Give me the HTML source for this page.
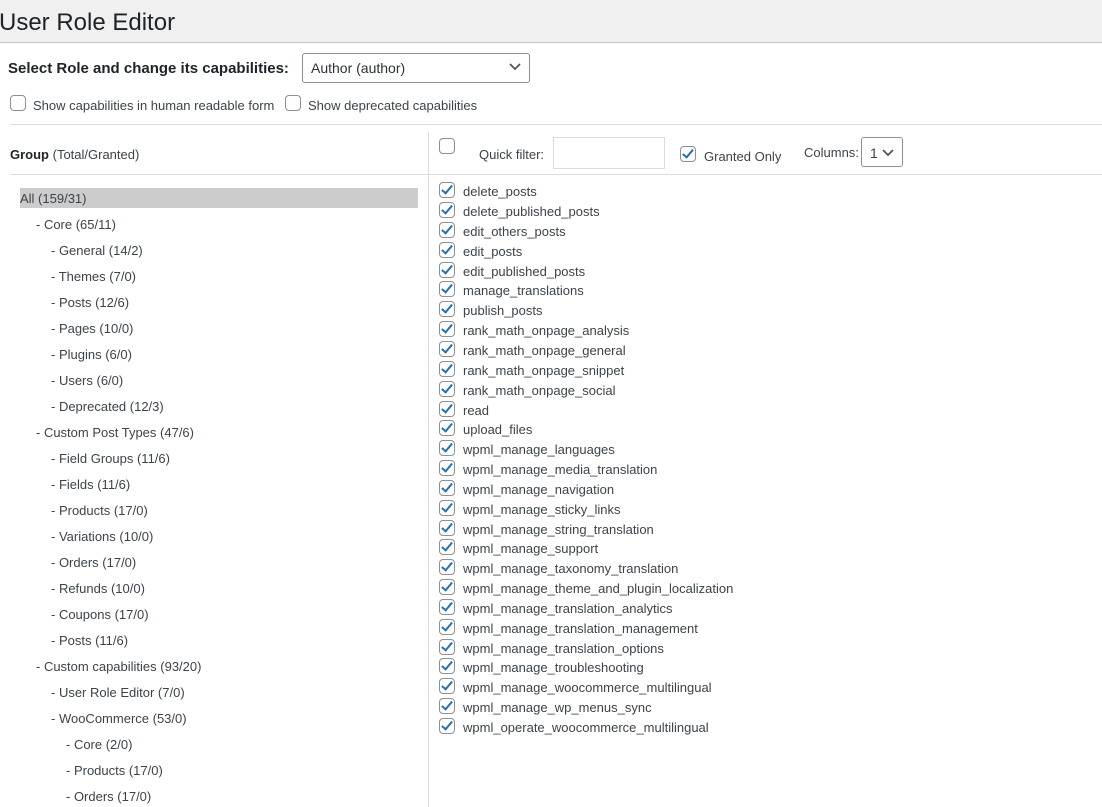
<!DOCTYPE html>
<html><head><meta charset="utf-8"><style>
body{margin:0;width:1102px;height:807px;overflow:hidden;background:#fff;font-family:"Liberation Sans",sans-serif;color:#3c434a;font-size:13px;position:relative}
.a{position:absolute;white-space:nowrap}
.cb{position:absolute;width:14px;height:14px;border:1px solid #8c8f94;border-radius:4px;background:#fff}
.cb.c::after{content:"";position:absolute;left:4px;top:0px;width:4px;height:9px;border:solid #2271b1;border-width:0 2.5px 2.5px 0;transform:rotate(40deg)}
.l{position:absolute;line-height:20px;font-size:13px;white-space:nowrap;margin-top:1px}
</style></head><body>
<div class="a" style="left:0;top:0;width:1102px;height:42px;background:#f0f0f1;border-bottom:1px solid #c3c4c7"></div>
<div class="a" style="left:-1px;top:9px;font-size:24px;color:#1d2327">User Role Editor</div>
<div class="a" style="left:8px;top:60px;font-size:15px;font-weight:bold;color:#1d2327">Select Role and change its capabilities:</div>
<div class="a" style="left:302px;top:53px;width:226px;height:28px;border:1px solid #8c8f94;border-radius:3px;"></div>
<div class="a" style="left:311px;top:60px;font-size:14px;color:#2c3338">Author (author)</div>
<svg class="a" style="left:508px;top:61px" width="14" height="12"><path d="M2 3 L7 8 L12 3" fill="none" stroke="#50575e" stroke-width="1.8"/></svg>
<div class="cb" style="left:10px;top:95px"></div>
<div class="a" style="left:33px;top:98px">Show capabilities in human readable form</div>
<div class="cb" style="left:285px;top:95px"></div>
<div class="a" style="left:308px;top:98px">Show deprecated capabilities</div>
<div class="a" style="left:10px;top:124px;width:1092px;height:1px;background:#dcdcde"></div>
<div class="a" style="left:428px;top:132px;width:1px;height:675px;background:#dcdcde"></div>
<div class="a" style="left:10px;top:174px;width:1092px;height:1px;background:#dcdcde"></div>
<div class="a" style="left:10px;top:147px"><b style="color:#1d2327">Group</b> (Total/Granted)</div>
<div class="cb" style="left:439px;top:138px"></div>
<div class="a" style="left:479px;top:147px">Quick filter:</div>
<div class="a" style="left:553px;top:137px;width:110px;height:30px;border:1px solid #dcdcde"></div>
<div class="cb c" style="left:680px;top:146px"></div>
<div class="a" style="left:704px;top:149px">Granted Only</div>
<div class="a" style="left:804px;top:145px">Columns:</div>
<div class="a" style="left:861px;top:137px;width:40px;height:28px;border:1px solid #8c8f94;border-radius:3px"></div>
<div class="a" style="left:870px;top:145px;font-size:14px">1</div>
<svg class="a" style="left:881px;top:147px" width="14" height="12"><path d="M2 3 L7 8 L12 3" fill="none" stroke="#50575e" stroke-width="1.8"/></svg>
<div class="a" style="left:20px;top:188px;width:398px;height:20px;background:#cccccc"></div>
<div class="l" style="left:20px;top:188px">All (159/31)</div>
<div class="l" style="left:36px;top:214px">- Core (65/11)</div>
<div class="l" style="left:51px;top:240px">- General (14/2)</div>
<div class="l" style="left:51px;top:266px">- Themes (7/0)</div>
<div class="l" style="left:51px;top:292px">- Posts (12/6)</div>
<div class="l" style="left:51px;top:318px">- Pages (10/0)</div>
<div class="l" style="left:51px;top:344px">- Plugins (6/0)</div>
<div class="l" style="left:51px;top:370px">- Users (6/0)</div>
<div class="l" style="left:51px;top:396px">- Deprecated (12/3)</div>
<div class="l" style="left:36px;top:422px">- Custom Post Types (47/6)</div>
<div class="l" style="left:51px;top:448px">- Field Groups (11/6)</div>
<div class="l" style="left:51px;top:474px">- Fields (11/6)</div>
<div class="l" style="left:51px;top:500px">- Products (17/0)</div>
<div class="l" style="left:51px;top:526px">- Variations (10/0)</div>
<div class="l" style="left:51px;top:552px">- Orders (17/0)</div>
<div class="l" style="left:51px;top:578px">- Refunds (10/0)</div>
<div class="l" style="left:51px;top:604px">- Coupons (17/0)</div>
<div class="l" style="left:51px;top:630px">- Posts (11/6)</div>
<div class="l" style="left:36px;top:656px">- Custom capabilities (93/20)</div>
<div class="l" style="left:51px;top:682px">- User Role Editor (7/0)</div>
<div class="l" style="left:51px;top:708px">- WooCommerce (53/0)</div>
<div class="l" style="left:66px;top:734px">- Core (2/0)</div>
<div class="l" style="left:66px;top:760px">- Products (17/0)</div>
<div class="l" style="left:66px;top:786px">- Orders (17/0)</div>

<div class="cb c" style="left:439px;top:182px"></div><div class="l" style="left:463px;top:181px">delete_posts</div>
<div class="cb c" style="left:439px;top:202px"></div><div class="l" style="left:463px;top:201px">delete_published_posts</div>
<div class="cb c" style="left:439px;top:222px"></div><div class="l" style="left:463px;top:221px">edit_others_posts</div>
<div class="cb c" style="left:439px;top:242px"></div><div class="l" style="left:463px;top:241px">edit_posts</div>
<div class="cb c" style="left:439px;top:262px"></div><div class="l" style="left:463px;top:261px">edit_published_posts</div>
<div class="cb c" style="left:439px;top:281px"></div><div class="l" style="left:463px;top:280px">manage_translations</div>
<div class="cb c" style="left:439px;top:301px"></div><div class="l" style="left:463px;top:300px">publish_posts</div>
<div class="cb c" style="left:439px;top:321px"></div><div class="l" style="left:463px;top:320px">rank_math_onpage_analysis</div>
<div class="cb c" style="left:439px;top:341px"></div><div class="l" style="left:463px;top:340px">rank_math_onpage_general</div>
<div class="cb c" style="left:439px;top:361px"></div><div class="l" style="left:463px;top:360px">rank_math_onpage_snippet</div>
<div class="cb c" style="left:439px;top:381px"></div><div class="l" style="left:463px;top:380px">rank_math_onpage_social</div>
<div class="cb c" style="left:439px;top:401px"></div><div class="l" style="left:463px;top:400px">read</div>
<div class="cb c" style="left:439px;top:420px"></div><div class="l" style="left:463px;top:419px">upload_files</div>
<div class="cb c" style="left:439px;top:440px"></div><div class="l" style="left:463px;top:439px">wpml_manage_languages</div>
<div class="cb c" style="left:439px;top:460px"></div><div class="l" style="left:463px;top:459px">wpml_manage_media_translation</div>
<div class="cb c" style="left:439px;top:480px"></div><div class="l" style="left:463px;top:479px">wpml_manage_navigation</div>
<div class="cb c" style="left:439px;top:500px"></div><div class="l" style="left:463px;top:499px">wpml_manage_sticky_links</div>
<div class="cb c" style="left:439px;top:520px"></div><div class="l" style="left:463px;top:519px">wpml_manage_string_translation</div>
<div class="cb c" style="left:439px;top:539px"></div><div class="l" style="left:463px;top:538px">wpml_manage_support</div>
<div class="cb c" style="left:439px;top:559px"></div><div class="l" style="left:463px;top:558px">wpml_manage_taxonomy_translation</div>
<div class="cb c" style="left:439px;top:579px"></div><div class="l" style="left:463px;top:578px">wpml_manage_theme_and_plugin_localization</div>
<div class="cb c" style="left:439px;top:599px"></div><div class="l" style="left:463px;top:598px">wpml_manage_translation_analytics</div>
<div class="cb c" style="left:439px;top:619px"></div><div class="l" style="left:463px;top:618px">wpml_manage_translation_management</div>
<div class="cb c" style="left:439px;top:639px"></div><div class="l" style="left:463px;top:638px">wpml_manage_translation_options</div>
<div class="cb c" style="left:439px;top:658px"></div><div class="l" style="left:463px;top:657px">wpml_manage_troubleshooting</div>
<div class="cb c" style="left:439px;top:678px"></div><div class="l" style="left:463px;top:677px">wpml_manage_woocommerce_multilingual</div>
<div class="cb c" style="left:439px;top:698px"></div><div class="l" style="left:463px;top:697px">wpml_manage_wp_menus_sync</div>
<div class="cb c" style="left:439px;top:718px"></div><div class="l" style="left:463px;top:717px">wpml_operate_woocommerce_multilingual</div>
</body></html>
